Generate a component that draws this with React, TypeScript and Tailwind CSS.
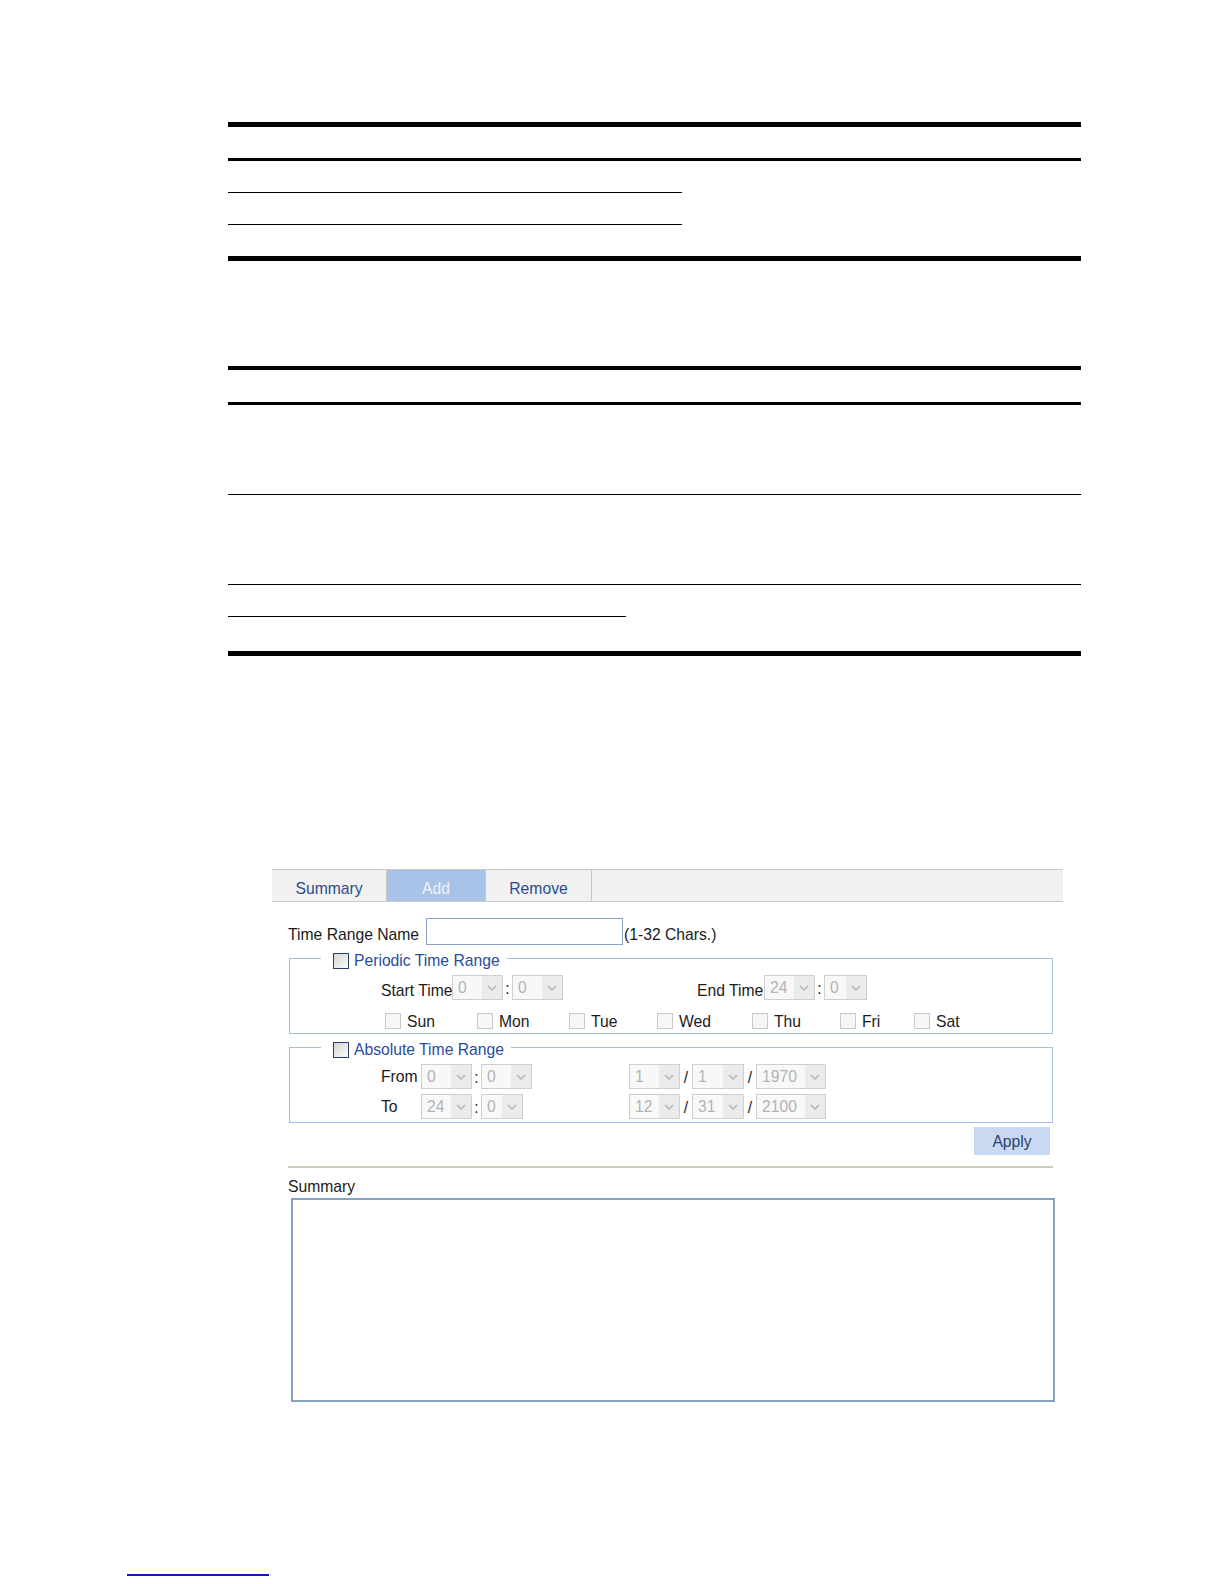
import { ReactNode } from 'react';

function Chevron() {
  return (
    <svg width="10" height="6" viewBox="0 0 10 6" fill="none">
      <path d="M1 1 L5 5 L9 1" stroke="#b5b5b5" strokeWidth="1.5" />
    </svg>
  );
}

function Sel({ value, w }: { value: string; w: string }) {
  return (
    <div className={`${w} h-[25px] flex border border-[#cfcfcf] bg-[#f8f8f8]`}>
      <span className="flex-1 pl-[5px] text-[#b3b3b3] leading-[23px]">{value}</span>
      <span className="w-[21px] bg-[#ebebeb] border-l border-[#f8f8f8] flex items-center justify-center">
        <Chevron />
      </span>
    </div>
  );
}

function Sep({ ch, w }: { ch: string; w: string }) {
  return <span className={`${w} text-center text-[#222] leading-none pt-[3px]`}>{ch}</span>;
}

function Box({ disabled }: { disabled?: boolean }) {
  return disabled ? (
    <span className="w-[16px] h-[16px] border border-[#c9c9c9] bg-[#f6f6f6] shrink-0" />
  ) : (
    <span className="w-[16px] h-[16px] border border-[#24406b] bg-linear-to-br from-[#d6d6d6] to-[#fafafa] shrink-0" />
  );
}

function Group({ title, children, className }: { title: string; children: ReactNode; className: string }) {
  return (
    <fieldset className={`w-[764px] ml-[1px] border border-[#a3bfe3] ${className}`}>
      <legend className="ml-[31px] pl-[12px] pr-[7px]">
        <span className="h-[20px] pt-[6px] flex items-center gap-[5px] text-[#2b4c9b] leading-none">
          <Box />
          {title}
        </span>
      </legend>
      {children}
    </fieldset>
  );
}

const days = [
  { d: 'Sun', w: 'w-[92px]' },
  { d: 'Mon', w: 'w-[92px]' },
  { d: 'Tue', w: 'w-[88px]' },
  { d: 'Wed', w: 'w-[95px]' },
  { d: 'Thu', w: 'w-[88px]' },
  { d: 'Fri', w: 'w-[74px]' },
  { d: 'Sat', w: 'w-[60px]' },
];

export default function App() {
  return (
    <div className="w-[1224px] h-[1584px] bg-white overflow-hidden font-['Liberation_Sans',Arial,sans-serif] text-[15.7px] text-[#1b1b1b]">
      {/* document tables */}
      <div className="pt-[122px] ml-[228px] w-[853px]">
        <div className="border-t-[5px] border-b-[5px] border-black">
          <div className="h-[34px] border-b-[3px] border-black" />
          <div className="grid grid-cols-[454px_1fr]">
            <div className="flex flex-col">
              <div className="h-[32px] border-b border-black" />
              <div className="h-[32px] border-b border-black" />
              <div className="h-[31px]" />
            </div>
            <div />
          </div>
        </div>

        <div className="mt-[105px] border-t-[4px] border-b-[5px] border-black">
          <div className="h-[35px] border-b-[3px] border-black" />
          <div className="h-[90px] border-b border-black" />
          <div className="h-[90px] border-b border-black" />
          <div className="grid grid-cols-[398px_1fr]">
            <div className="flex flex-col">
              <div className="h-[32px] border-b border-black" />
              <div className="h-[34px]" />
            </div>
            <div />
          </div>
        </div>
      </div>

      {/* web UI screenshot */}
      <div className="ml-[272px] mt-[213px] w-[791px]">
        <div className="h-[33px] flex border-y border-[#c9c9c9] bg-[#f1f1f1] leading-none">
          <div className="w-[115px] border-r border-[#c8c8c8] flex items-center justify-center pt-[6px] text-[#2b4c8c]">Summary</div>
          <div className="w-[99px] border-r border-[#c8c8c8] bg-[#a8c2e8] flex items-center justify-center pt-[6px] text-[#eef3fb]">Add</div>
          <div className="w-[106px] border-r border-[#c8c8c8] flex items-center justify-center pt-[6px] text-[#2b4c8c]">Remove</div>
          <div className="flex-1" />
        </div>

        <div className="pl-[16px]">
          <div className="mt-[16px] h-[27px] flex items-center leading-none">
            <span className="w-[138px] whitespace-nowrap pt-[6px]">Time Range Name</span>
            <div className="w-[197px] h-[27px] border border-[#87a3c6] bg-white" />
            <span className="ml-[1px] pt-[6px]">(1-32 Chars.)</span>
          </div>

          <Group title="Periodic Time Range" className="mt-[3px] pb-[3px]">
            <div className="mt-[7px] h-[25px] flex items-center ml-[91px] leading-none">
              <span className="w-[71px] whitespace-nowrap pt-[6px]">Start Time</span>
              <Sel value="0" w="w-[51px]" />
              <Sep ch=":" w="w-[9px]" />
              <Sel value="0" w="w-[51px]" />
              <span className="ml-[134px] w-[67px] whitespace-nowrap pt-[6px]">End Time</span>
              <Sel value="24" w="w-[51px]" />
              <Sep ch=":" w="w-[9px]" />
              <Sel value="0" w="w-[43px]" />
            </div>
            <div className="mt-[12px] h-[18px] flex items-center ml-[95px] leading-none">
              {days.map((x) => (
                <div key={x.d} className={`${x.w} flex items-center gap-[6px]`}>
                  <Box disabled />
                  <span className="pt-[2px]">{x.d}</span>
                </div>
              ))}
            </div>
          </Group>

          <Group title="Absolute Time Range" className="mt-[3px] pb-[3px]">
            <div className="mt-[7px] h-[25px] flex items-center ml-[91px] leading-none">
              <span className="w-[40px]">From</span>
              <div className="w-[111px] flex items-center">
                <Sel value="0" w="w-[51px]" />
                <Sep ch=":" w="w-[9px]" />
                <Sel value="0" w="w-[51px]" />
              </div>
              <div className="ml-[97px] flex items-center">
                <Sel value="1" w="w-[51px]" />
                <Sep ch="/" w="w-[12px]" />
                <Sel value="1" w="w-[52px]" />
                <Sep ch="/" w="w-[12px]" />
                <Sel value="1970" w="w-[70px]" />
              </div>
            </div>
            <div className="mt-[5px] h-[25px] flex items-center ml-[91px] leading-none">
              <span className="w-[40px]">To</span>
              <div className="w-[111px] flex items-center">
                <Sel value="24" w="w-[51px]" />
                <Sep ch=":" w="w-[9px]" />
                <Sel value="0" w="w-[42px]" />
              </div>
              <div className="ml-[97px] flex items-center">
                <Sel value="12" w="w-[51px]" />
                <Sep ch="/" w="w-[12px]" />
                <Sel value="31" w="w-[52px]" />
                <Sep ch="/" w="w-[12px]" />
                <Sel value="2100" w="w-[70px]" />
              </div>
            </div>
          </Group>

          <div className="w-[765px] mt-[4px] flex justify-end pr-[3px]">
            <button className="w-[76px] h-[28px] bg-[#c8d9f1] text-[#2c3e74] leading-none pt-[2px]">Apply</button>
          </div>

          <div className="mt-[11px] w-[765px] h-[2px] bg-[#cdcdbd]" />

          <div className="mt-[9px] h-[20px] leading-[20px]">Summary</div>
          <div className="mt-[1px] ml-[3px] w-[764px] h-[204px] border-2 border-[#86a0bf] bg-white" />
        </div>
      </div>

      {/* link underline */}
      <div className="mt-[172px] ml-[127px] w-[142px] h-[2px] bg-[#1414c0]" />
    </div>
  );
}
